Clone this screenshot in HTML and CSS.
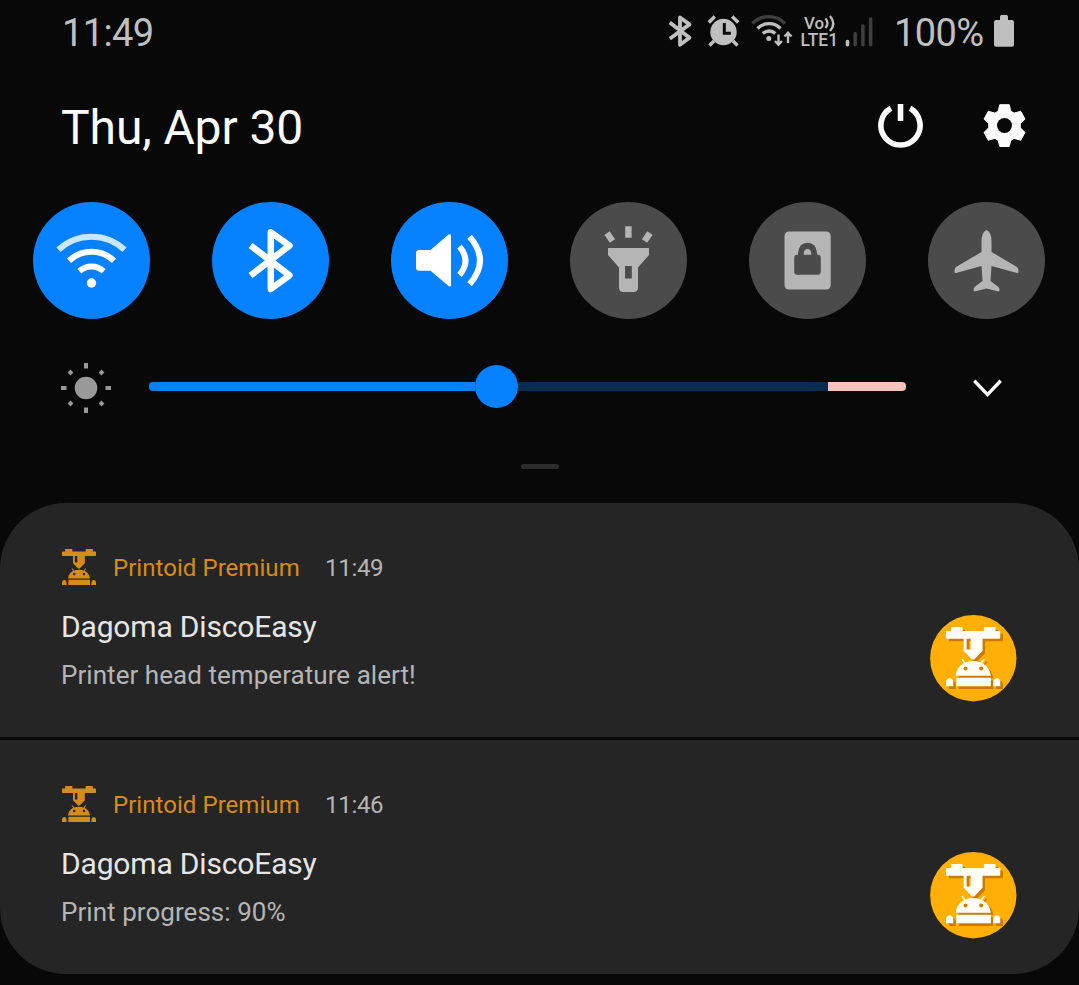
FILE: index.html
```html
<!DOCTYPE html>
<html lang="en">
<head>
<meta charset="utf-8">
<title>Notifications</title>
<link rel="stylesheet" href="styles.css">
</head>
<body>
<svg class="defs" aria-hidden="true">
  <symbol id="printer" viewBox="93 66 164 178" preserveAspectRatio="none">
    <path fill-rule="evenodd" d="M93 80q0-2 2-2h13V68q0-2 2-2h31q2 0 2 2v10h64V68q0-2 2-2h31q2 0 2 2v10h13q2 0 2 2v17q0 4-3 4H203v36L178 163h-7L146 137V101H96q-3 0-3-4zM155 101v32h12v-32z"/>
    <path fill-rule="evenodd" d="M122 212q2-24 25-38l-8-11 4-2 9 11q22-8 45 0l9-11 4 2-8 11q23 14 26 38zM146 190a6 6 0 1 0 12 0a6 6 0 1 0-12 0zM193 190a6 6 0 1 0 12 0a6 6 0 1 0-12 0z"/>
    <path d="M124 218h104v26H124zM93 244V230q2-11 11-11t11 11v14zM235 244V230q2-11 11-11t11 11v14z"/>
  </symbol>
</svg>
<header class="status">
  <span class="clock">11:49</span>
  <div class="indicators">
    <svg class="s-bt" viewBox="668 14 25 34"><path class="line" stroke-width="3.8" stroke-linejoin="round" d="M669.8 22.5 689.5 37.7 680 44.8V17.5L689.5 24.4 669.8 38.8"/></svg>
    <svg class="s-alarm" viewBox="706 14 36 34"><circle cx="723.5" cy="32" r="13.2"/><path d="M714 41l-4.500 4.500M733 41l4.500 4.500M708.800 22.500l6-6M738.200 22.500l-6-6" class="line" stroke-width="3.500"/><path class="hole" d="M724.300 23v10.300h6.500"/></svg>
    <svg class="s-wifi" viewBox="750 14 44 34"><path class="line dim" stroke-width="3.300" d="M752.500 23.500a22.500 22.500 0 0 1 32.500 0"/><path class="line" stroke-width="3.300" d="M757.500 28.500a16 16 0 0 1 23 0M762.800 33.500a9 9 0 0 1 12.500 0"/><circle cx="768.800" cy="38.500" r="2.500"/><path class="line" stroke-width="2.400" d="M778.500 34.500V44.500M775 41l3.500 3.800L782 41M788 43V33M784.500 36.500l3.500-3.800 3.500 3.800"/></svg>
    <svg class="s-lte" viewBox="799 14 40 34"><text x="804" y="29" font-size="17" textLength="20" lengthAdjust="spacingAndGlyphs">Vo</text><path class="line" stroke-width="2.300" d="M825.500 18.500q4 4.500 0 9.500M830 16q6.500 7.500 0 15"/><text x="800.500" y="46.300" font-size="18" textLength="37.500" lengthAdjust="spacingAndGlyphs">LTE1</text></svg>
    <svg class="s-signal" viewBox="845 14 29 34"><path class="line" stroke-width="3.500" stroke-linecap="round" d="M847.500 41.500v3.200"/><path class="line dim" stroke-width="3.500" stroke-linecap="round" d="M855.200 33.500v11.200M862.900 26v18.700M870.600 19v25.700"/></svg>
    <span class="percent">100%</span>
    <svg class="s-battery" viewBox="993 14 22 34"><path d="M1000 20v-3.500q0-1.500 1.500-1.500h5q1.500 0 1.500 1.500V20h4q2 0 2 2v22.700q0 2-2 2h-16q-2 0-2-2V22q0-2 2-2z"/></svg>
  </div>
</header>
<div class="date-row">
  <h1>Thu, Apr 30</h1>
  <div class="actions">
    <svg class="power" viewBox="877 102 48 48"><path d="M891 108.300a19.600 19.600 0 1 0 19 0M900.500 104v17"/></svg>
    <svg class="gear" viewBox="982 103 45 46"><path d="M999.800 104.700h9.400l1.700 6.600 3.200 1.800 6.600-1.800 4.300 7.800-4.700 4.600v4.100l4.700 4.600-4.300 7.800-6.600-1.800-3.200 1.800-1.700 6.300h-9.400l-1.700-6.300-3.200-1.800-6.600 1.800-4.300-7.800 4.700-4.600v-4.100l-4.700-4.600 4.300-7.800 6.600 1.800 3.200-1.800z"/><circle cx="1004.500" cy="125.500" r="7.500"/></svg>
  </div>
</div>
<div class="tiles">
  <div class="tile on"><svg viewBox="33 202 117 117"><path class="line faint" stroke-width="6" d="M58.500 249.800a48 48 0 0 1 66 0"/><path class="line" stroke-width="6" d="M69 260.800a32.500 32.500 0 0 1 45 0M79.300 271.300a18 18 0 0 1 24.400 0"/><circle cx="91.500" cy="283" r="4.700"/></svg></div>
  <div class="tile on"><svg viewBox="212 202 117 117"><path class="line" stroke-width="6.500" stroke-linejoin="round" d="M250.500 245.500 289.500 275.300 270.800 289V232.300L289.500 245.600 250.500 275.500"/></svg></div>
  <div class="tile on"><svg viewBox="391 202 117 117"><path d="M416 253q0-3 3-3h11.500L448.500 234.500q2.500-1 2.500 1v49.500q0 2.500-2.500 1L430.500 270.800H419q-3 0-3-3z"/><path class="line" stroke-width="6" d="M459.500 246.500q12 14 0 28.500M469.500 236.800q21 23.500 0 47.500"/></svg></div>
  <div class="tile"><svg viewBox="570 202 117 117"><path fill-rule="evenodd" d="M608 248h41v7L638 267.500V287.500q0 4.500-4.500 4.500h-10q-4.500 0-4.500-4.500V267.500L608 255zM625 266v12.500h6.800V266z"/><path class="line" stroke-width="6.400" d="M628.400 226.300v11.500M607 233.200l5.500 7.800M650 233.200l-5.500 7.800"/></svg></div>
  <div class="tile"><svg viewBox="749 202 117 117"><rect x="784.500" y="231.500" width="46.200" height="58" rx="4.500"/><path class="cut" fill-rule="evenodd" d="M798 254.800v-2q1-10 9.500-10t9.500 10v2h.8q3 0 3 3v14q0 3-3 3h-20.600q-3 0-3-3v-14q0-3 3-3zM803.700 254.800h7.600v-1.500q-.5-4.300-3.800-4.300t-3.800 4.300z"/></svg></div>
  <div class="tile"><svg viewBox="928 202 117 117"><path d="M986.500 230q5 2 5 12v10L1017 267q1.500 1 1.500 4.500 0 2-1.500 1.500L991.500 266 990.500 281 998.500 287q1 1 1 3t-2 1.300L986.500 288.600 975.500 291.200q-2 .3-2-1.300t1-3L982.500 281 981.500 266 956 273q-1.500.5-1.500-1.500 0-3.500 1.500-4.500L981.500 252V242q0-10 5-12z"/></svg></div>
</div>
<div class="brightness">
  <svg class="sun" viewBox="60 362 52 52"><circle cx="86" cy="388" r="11.300"/><path d="M86 363v5.500M86 407.500v5.500M61 388h5.500M105.500 388h5.500M69 371l3 3M100 402l3 3M69 405l3-3M100 374l3-3"/></svg>
  <div class="track"><div class="filled"></div><div class="thumb"></div><div class="rest"></div><div class="limit"></div></div>
  <svg class="chevron" viewBox="972 377 31 22"><path d="M974.300 380.800 987.500 394.600 1000.700 380.800"/></svg>
</div>
<div class="handle"></div>
<main class="notifications">
  <article class="card">
    <div class="app"><svg><use href="#printer"/></svg><span class="name">Printoid Premium</span><time>11:49</time></div>
    <div class="content"><div class="copy"><h2>Dagoma DiscoEasy</h2><p>Printer head temperature alert!</p></div>
    <svg class="logo" viewBox="930 615 87 87"><circle cx="973.300" cy="658.200" r="43.200"/><use class="shade" href="#printer" x="948.500" y="629.500" width="54.500" height="59.500"/><use class="mark" href="#printer" x="946" y="627" width="54.500" height="59.500"/></svg></div>
  </article>
  <article class="card">
    <div class="app"><svg><use href="#printer"/></svg><span class="name">Printoid Premium</span><time>11:46</time></div>
    <div class="content"><div class="copy"><h2>Dagoma DiscoEasy</h2><p>Print progress: 90%</p></div>
    <svg class="logo" viewBox="930 615 87 87"><circle cx="973.300" cy="658.200" r="43.200"/><use class="shade" href="#printer" x="948.500" y="629.500" width="54.500" height="59.500"/><use class="mark" href="#printer" x="946" y="627" width="54.500" height="59.500"/></svg></div>
  </article>
</main>
</body>
</html>
```
FILE: styles.css
```css
* { box-sizing: border-box; margin: 0; }
body { width: 1079px; height: 985px; overflow: hidden; background: #080808; color: #fafafa; font-family: Roboto, sans-serif; display: flex; flex-direction: column; }
svg { display: block; flex: none; }
h1, h2 { font-weight: 400; white-space: nowrap; }
.defs { width: 0; height: 0; position: absolute; }
.line { fill: none; stroke: currentColor; }
.dim { opacity: .3; }
.faint { opacity: .8; }

.status { height: 62px; padding: 0 64px 0 62px; display: flex; justify-content: space-between; align-items: center; color: #bfbfbf; font-size: 38px; line-height: 44px; }
.status svg { height: 34px; fill: currentColor; }
.status svg .line { fill: none; }
.clock, .percent { padding-top: 3px; letter-spacing: -.6px; }
.indicators { display: flex; align-items: center; }
.s-bt { width: 25px; margin-right: 13px; }
.s-alarm { width: 36px; margin-right: 8px; }
.s-alarm .hole { fill: none; stroke: #080808; stroke-width: 3; }
.s-wifi { width: 44px; margin-right: 5px; }
.s-lte { width: 40px; margin-right: 6px; font-weight: 500; overflow: visible; }
.s-signal { width: 29px; margin-right: 20px; }
.percent { width: 99px; white-space: nowrap; }
.s-battery { width: 22px; }

.date-row { height: 128px; padding: 0 52px 0 61px; display: flex; justify-content: space-between; align-items: center; }
h1 { font-size: 48px; line-height: 56px; padding-top: 4px; letter-spacing: -.1px; }
.actions { display: flex; align-items: center; gap: 57px; }
.power { width: 48px; height: 48px; fill: none; stroke: #fafafa; stroke-width: 5.600; }
.gear { width: 45px; height: 46px; fill: #fafafa; stroke: #fafafa; stroke-width: 1; stroke-linejoin: round; }
.gear circle { fill: #080808; stroke: none; }

.tiles { display: flex; justify-content: space-between; padding: 12px 34px 0 33px; }
.tile { width: 117px; height: 117px; border-radius: 50%; background: #4b4b4b; color: #b5b5b5; }
.tile.on { background: #0681ff; color: #fff; }
.tile svg { width: 117px; height: 117px; fill: currentColor; }
.tile .line { fill: none; }
.tile .cut { fill: #4b4b4b; }

.brightness { display: flex; align-items: center; height: 52px; margin-top: 43px; padding: 0 76px 0 60px; }
.sun { width: 52px; height: 52px; fill: #999; }
.sun path { stroke: #999; stroke-width: 4; }
.track { display: flex; align-items: center; width: 757px; margin: -3px 66px 0 37px; }
.track div { height: 9px; }
.track .filled { width: 326px; background: #0681ff; border-radius: 4px 0 0 4px; }
.track .thumb { width: 43px; height: 43px; border-radius: 50%; background: #0681ff; }
.track .rest { width: 310px; background: #062c4f; }
.track .limit { width: 78px; background: #f7c1bc; border-radius: 0 4px 4px 0; }
.chevron { width: 31px; height: 22px; fill: none; stroke: #fafafa; stroke-width: 3.400; }
.handle { width: 38px; height: 5px; border-radius: 3px; background: #2c2c2c; margin: 50px auto 0 521px; }

.notifications { margin-top: 34px; display: flex; flex-direction: column; gap: 3px; }
.card { height: 234px; background: #252525; padding: 46px 62px 0 61px; }
.card:first-child { border-radius: 66px 66px 0 0; }
.card:last-child { border-radius: 0 0 66px 66px; }
.app { height: 37px; display: flex; align-items: center; font-size: 24px; line-height: 30px; }
.app svg { width: 34px; height: 36px; margin: -1px 0 0 1px; fill: #d78c18; }
.name { width: 212px; margin-left: 17px; color: #d78c18; white-space: nowrap; letter-spacing: .05px; }
.app time { color: #b5b5b5; letter-spacing: -.3px; }
.content { display: flex; justify-content: space-between; margin-top: 23px; }
.copy { display: flex; flex-direction: column; gap: 13px; }
h2 { font-size: 30px; line-height: 36px; color: #e6e6e6; letter-spacing: -.17px; }
p { font-size: 26px; line-height: 34px; color: #b5b5b5; letter-spacing: .05px; }
.logo { width: 87px; height: 87px; margin-top: 6px; fill: #ffaf05; }
.logo .shade { fill: #c97b08; }
.logo .mark { fill: #fffdf5; }
```
